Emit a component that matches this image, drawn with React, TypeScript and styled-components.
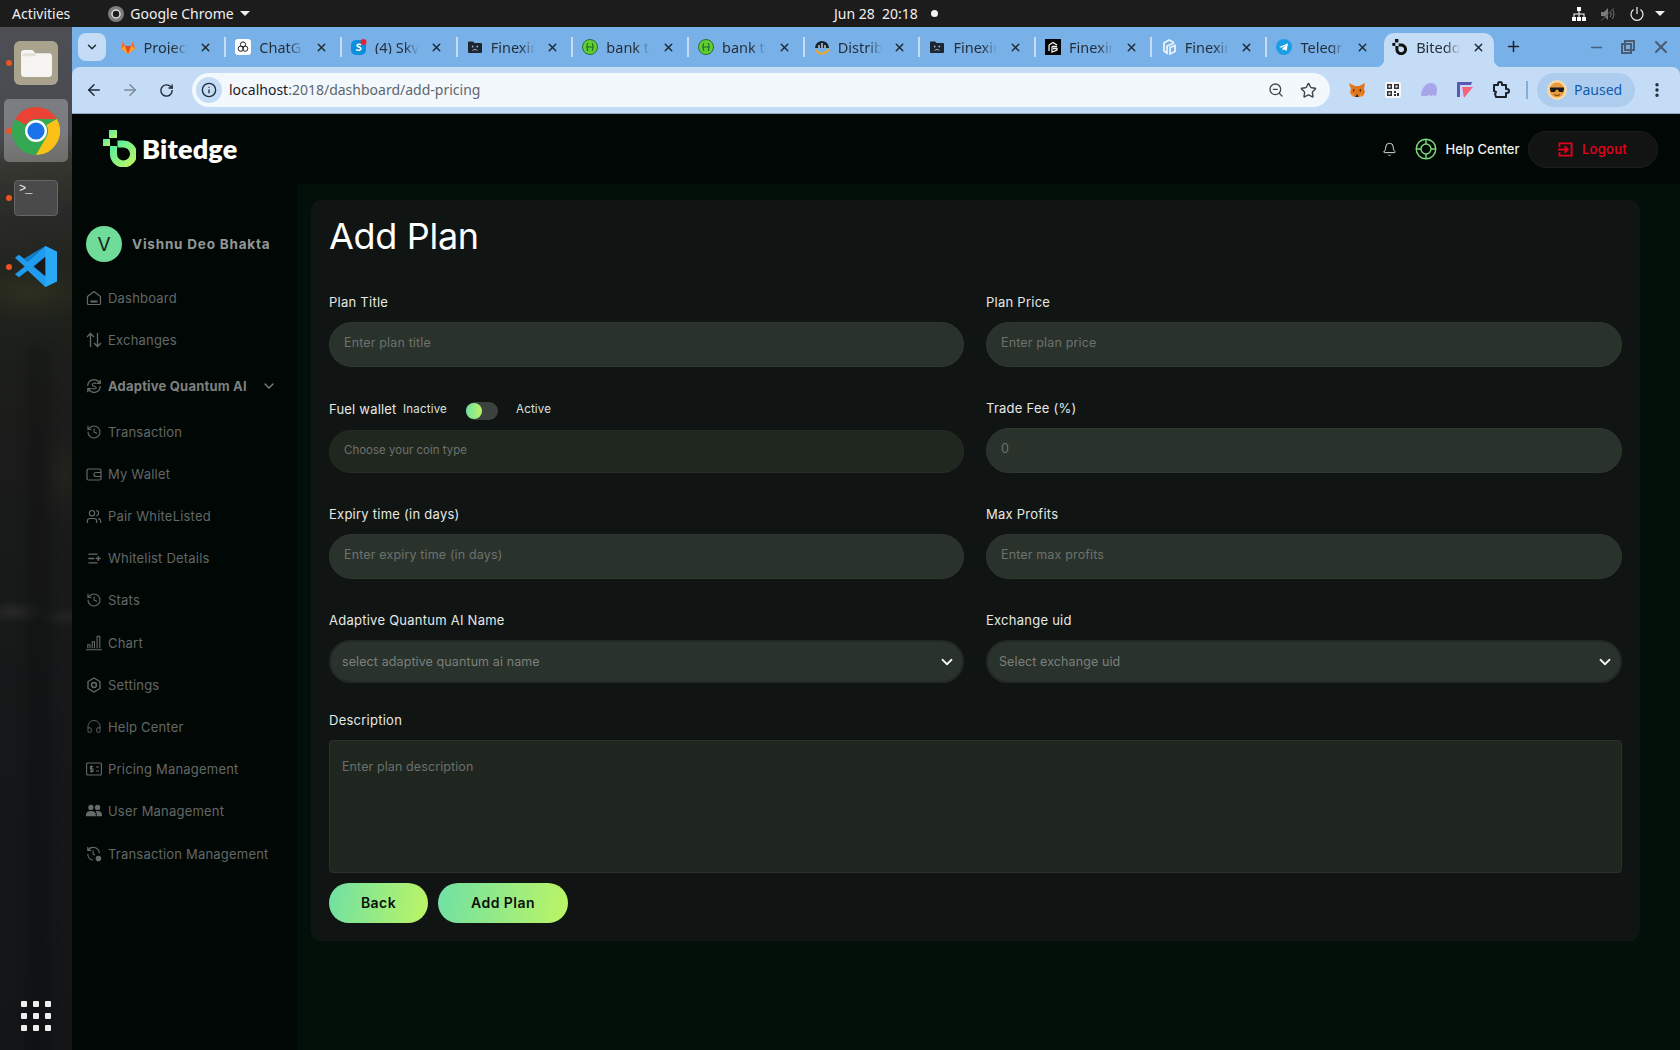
import React from 'react';
import styled, { createGlobalStyle } from 'styled-components';
import {
  ArrowLeft, ArrowRight, RotateCw, Info, ZoomOut, Star, X, Plus, Minus, ChevronDown, Bell,
  History, Headphones, ListPlus, Users, EllipsisVertical,
} from 'lucide-react';

const Global = createGlobalStyle`
  html, body { margin: 0; padding: 0; background: #010705; }
  * { box-sizing: border-box; }
  #root { width: 1680px; height: 1050px; overflow: hidden; }
`;

const AppFont = `"Inter", "Noto Sans", sans-serif`;
const SysFont = `"Noto Sans", "Open Sans", sans-serif`;

const Root = styled.div`
  width: 1680px; height: 1050px; display: flex; flex-direction: column; overflow: hidden;
  font-family: ${AppFont};
`;

/* GNOME bar */
const TopBar = styled.header`
  height: 27px; flex: none; background: #1c1c1c; color: #f0f0f0;
  display: grid; grid-template-columns: 834px auto 1fr; align-items: center;
  font: 14px/27px ${SysFont};
`;
const TopLeft = styled.div`display: flex; align-items: center; padding-left: 12px;`;
const AppMenu = styled.div`display: flex; align-items: center; gap: 6px; margin-left: 38px;`;
const Caret = styled.span<{ $ml: number }>`
  width: 0; height: 0; border-left: 5px solid transparent; border-right: 5px solid transparent;
  border-top: 5px solid #f0f0f0; margin-left: ${p => p.$ml}px;
`;
const Clock = styled.div`display: flex; align-items: center; gap: 13px; font-size: 14px; white-space: pre;`;
const ClockDot = styled.span`width: 7px; height: 7px; border-radius: 50%; background: #f4f4f4;`;
const TopRight = styled.div`display: flex; align-items: center; justify-content: flex-end; gap: 13px; padding-right: 15px;`;

/* Desktop */
const Desktop = styled.div`flex: 1; display: flex; min-height: 0;`;
const Dock = styled.aside`
  width: 72px; flex: none; display: flex; flex-direction: column; align-items: center; position: relative; overflow: hidden;
  background:
    radial-gradient(ellipse 34px 12px at 14px 585px, rgba(120,120,115,.16), transparent),
    radial-gradient(ellipse 26px 10px at 66px 590px, rgba(110,110,105,.13), transparent),
    radial-gradient(ellipse 70px 30px at 30px 265px, rgba(72,76,34,.3), transparent),
    radial-gradient(ellipse 30px 50px at 64px 450px, rgba(50,54,34,.3), transparent),
    linear-gradient(172deg, #4d4f55 0, #484a4f 110px, #35362f 142px, #2a2b28 190px, #22241f 240px, #1d1f1b 320px, #191a1a 480px, #161718 700px, #141517 100%);
  &::before {
    content: ''; position: absolute; left: 26px; width: 24px; top: 320px; bottom: -20px;
    background: rgba(0,0,0,.16); filter: blur(5px);
  }
`;
const DockSlot = styled.div<{ $h: number; $active?: boolean; $mt: number }>`
  width: 64px; height: ${p => p.$h}px; margin-top: ${p => p.$mt}px; flex: none; position: relative;
  display: flex; align-items: center; justify-content: center; border-radius: 5px;
  background: ${p => (p.$active ? 'rgba(255,255,255,.28)' : 'transparent')};
`;
const RunDot = styled.span`
  position: absolute; left: 2px; top: 50%; margin-top: -3px; width: 6px; height: 6px; border-radius: 50%; background: #e95420;
`;
const FilesTile = styled.div`
  width: 44px; height: 44px; border-radius: 6px; background: #a9a28d; display: flex; align-items: center; justify-content: center;
`;
const Term = styled.div`
  width: 44px; height: 36px; border-radius: 4px; background: #4a4a4a; border: 1px solid #666; color: #eee;
  font: 12px/14px "Liberation Mono", monospace; padding: 1px 0 0 4px; letter-spacing: -1px;
`;
const AppGrid = styled.div`
  position: absolute; left: 21px; bottom: 19px; display: grid; grid-template-columns: repeat(3, 6px); gap: 6px;
`;
const AppGridDot = styled.span`width: 6px; height: 6px; background: #eee; border-radius: 1px;`;

/* Browser */
const Browser = styled.main`flex: 1; display: flex; flex-direction: column; min-width: 0;`;
const TabStrip = styled.div`height: 40px; flex: none; background: #78b0e8; display: flex; padding-left: 6px; position: relative;`;
const TabSearch = styled.div`
  width: 28px; height: 28px; margin-top: 6px; margin-right: 3.6px; border-radius: 8px; background: #c5dcf6; color: #1f2a36;
  display: flex; align-items: center; justify-content: center;
`;
const Tab = styled.div<{ $active?: boolean; $last?: boolean }>`
  width: 115.7px; height: 34px; margin-top: 6px; flex: none; display: flex; align-items: center; position: relative;
  padding: 0 0 6px 10px; color: #26303c; font: 14.5px/1 ${SysFont};
  &::before {
    content: ''; position: absolute; inset: 0 4px 0 2px; border-radius: 10px 10px 0 0;
    background: ${p => (p.$active ? '#c5dcf6' : 'transparent')};
  }
  &::after {
    content: ''; position: absolute; right: -1px; top: 4px; height: 20px; width: 2px;
    background: ${p => (p.$active || p.$last ? 'transparent' : '#c5dcf6')};
  }
`;
const Flare = styled.span<{ $side: 'l' | 'r' }>`
  position: absolute; bottom: 0; width: 8px; height: 8px;
  ${p => (p.$side === 'l' ? 'left: -6px;' : 'right: -4px;')}
  background: radial-gradient(circle at ${p => (p.$side === 'l' ? '0 0' : '100% 0')}, transparent 8px, #c5dcf6 8.5px);
`;
const TabIcon = styled.span`width: 16px; height: 16px; flex: none; position: relative; display: flex;`;
const TabTitle = styled.span`
  position: relative; width: 44px; margin-left: 8px; white-space: nowrap; overflow: hidden;
  -webkit-mask-image: linear-gradient(90deg, #000 68%, transparent 100%);
  mask-image: linear-gradient(90deg, #000 68%, transparent 100%);
`;
const TabClose = styled.span`position: relative; margin-left: 11.500px; display: flex; color: #1d2630;`;
const NewTab = styled.div`width: 30px; height: 28px; margin-top: 5px; margin-left: 1px; display: flex; align-items: center; justify-content: center; color: #1d2630;`;
const WindowBtns = styled.div`
  margin-left: auto; display: flex; align-items: center; gap: 16px; padding: 6px 9px 0 0; height: 34px; color: #4a5d74;
`;
const Toolbar = styled.div`
  height: 47px; flex: none; background: #78b0e8;
`;
const ToolbarInner = styled.div`
  height: 47px; background: #c5dcf6; border-radius: 8px 8px 0 0; border-bottom: 1px solid #8ea8c4;
  display: flex; align-items: center; padding-left: 4px;
`;
const NavBtn = styled.div<{ $dim?: boolean }>`
  width: 36px; height: 34px; display: flex; align-items: center; justify-content: center;
  color: ${p => (p.$dim ? '#7d8b9b' : '#1f2a36')};
`;
const UrlBar = styled.div`
  width: 1138px; height: 34px; margin-left: 8px; border-radius: 17px; background: #f3f8fd; flex: none;
  display: flex; align-items: center; padding: 0 13px 0 4px; font: 14px/1 ${SysFont}; color: #5d6670;
`;
const InfoChip = styled.span`
  width: 26px; height: 26px; border-radius: 50%; background: #c5dcf6; color: #1f2a36;
  display: flex; align-items: center; justify-content: center; margin-right: 7px;
`;
const Host = styled.span`color: #1b2128;`;
const UrlTools = styled.div`margin-left: auto; display: flex; align-items: center; gap: 16px; color: #3f4750;`;
const Exts = styled.div`display: flex; align-items: center; gap: 14px; margin-left: 16px; width: 181px; color: #1b2128;`;
const ExtIcon = styled.span`width: 22px; height: 22px; display: flex; align-items: center; justify-content: center; flex: none;`;
const ToolSep = styled.span`width: 2px; height: 18px; background: #7fb0dd; flex: none; margin: 0 9px 0 -1px;`;
const Profile = styled.div`
  width: 98px; height: 34px; border-radius: 17px; background: #aecdee; flex: none;
  display: flex; align-items: center; padding-left: 10px; gap: 7px; color: #0d5cb0; font: 14px/1 ${SysFont};
`;
const Kebab = styled.div`margin-left: 13px; display: flex; color: #1f2a36;`;

/* Page */
const Page = styled.div`flex: 1; min-height: 0; display: flex; flex-direction: column; background: #010705;`;
const AppHeader = styled.div`height: 70px; flex: none; display: flex; align-items: center; padding-left: 31px; padding-right: 22.5px;`;
const Logo = styled.div`display: flex; align-items: center; gap: 6px; height: 40px; margin-top: -2px;`;
const LogoText = styled.span`
  color: #fff; font: 800 27px/1 "Lato", "Inter", sans-serif; letter-spacing: .2px;
`;
const HeadRight = styled.div`margin-left: auto; display: flex; align-items: center; color: #fff;`;
const BellBtn = styled.span`display: flex; color: #d7d9d8; margin-right: 18px;`;
const HelpLink = styled.span`font-size: 13px; font-weight: 500; margin-left: 8px; color: #eef0ef;`;
const LogoutBtn = styled.button`
  width: 130px; height: 37px; margin-left: 8px; border-radius: 19px; background: #111412; border: 1px solid #1b1f1c;
  color: #e6001e; font: 500 13px/1 ${AppFont}; letter-spacing: .3px; display: flex; align-items: center; justify-content: center; gap: 9px;
`;
const Body = styled.div`flex: 1; min-height: 0; display: flex;`;
const Sidebar = styled.nav`width: 225px; flex: none; padding: 42px 0 0 14px;`;
const UserRow = styled.div`display: flex; align-items: center; gap: 10px; margin-bottom: 15px;`;
const Avatar = styled.div`
  width: 36px; height: 36px; border-radius: 50%; background: #6fdc9a; color: #14241b;
  display: flex; align-items: center; justify-content: center; font-size: 19px; font-weight: 400;
`;
const UserName = styled.div`font-size: 13.5px; font-weight: 700; letter-spacing: .8px; color: #929795;`;
const NavList = styled.ul`list-style: none; margin: 0; padding: 0;`;
const NavItem = styled.li<{ $bold?: boolean }>`
  height: 42.2px; display: flex; align-items: center; gap: 6px; font-size: 13px; letter-spacing: .2px;
  color: #636866; font-weight: ${p => (p.$bold ? 700 : 400)};
  ${p => (p.$bold ? 'margin: 3.5px 0; color: #7d817f;' : '')}
`;
const NavIcon = styled.span`width: 16px; height: 16px; flex: none; display: flex; align-items: center; justify-content: center; color: #666b69; position: relative;`;
const NavChevron = styled.span`display: flex; margin-left: 8px; color: #7d817f;`;
const Main = styled.section`flex: 1; min-width: 0; background: #03100a; padding: 16px 40px 0 14px;`;
const Panel = styled.div`background: #101412; border-radius: 10px; padding: 14px 18px 18px;`;
const Title = styled.h1`margin: 0 0 34px; font: 400 36px/44px ${AppFont}; color: #fff; letter-spacing: -.3px;`;
const FormGrid = styled.div`display: grid; grid-template-columns: 635px 636px; column-gap: 22px; row-gap: 31px;`;
const Field = styled.div`display: flex; flex-direction: column; min-width: 0;`;
const Label = styled.label`display: block; height: 20px; margin-bottom: 10px; font: 400 13px/20px ${AppFont}; letter-spacing: .25px; color: #e6e8e6;`;
const FuelLabelRow = styled.div`display: flex; align-items: center; height: 22px; margin-bottom: 10px;`;
const FuelLabel = styled.span`font-size: 13px; letter-spacing: .2px; color: #e6e8e6; width: 74px;`;
const ToggleText = styled.span<{ $w: number }>`font-size: 11.5px; letter-spacing: .2px; color: #dfe2df; width: ${p => p.$w}px;`;
const Toggle = styled.span`
  width: 32px; height: 18px; border-radius: 9px; background: #3c423e; display: flex; align-items: center; margin: 4px 18px 0 0;
`;
const Knob = styled.span`width: 16px; height: 16px; border-radius: 50%; background: linear-gradient(90deg, #6fe0a4, #bdf564);`;
const Input = styled.div<{ $dark?: boolean; $h?: number }>`
  height: ${p => p.$h ?? 45}px; border-radius: 23px; background: ${p => (p.$dark ? '#20271f' : '#2a322c')};
  border: 1px solid ${p => (p.$dark ? '#252c26' : '#2f3731')};
  display: flex; align-items: center; padding: 0 14px 4px; font-size: ${p => (p.$dark ? 11.5 : 12.5)}px;
  letter-spacing: ${p => (p.$dark ? 0 : 0.15)}px; color: #6c726e;
`;
const Select = styled.div`
  height: 43px; border-radius: 22px; background: #2a322c; border: 2px solid #222925;
  display: flex; align-items: center; justify-content: space-between; padding: 0 6px 0 11px;
  font-size: 12.5px; letter-spacing: .1px; color: #7a807c;
`;
const SelectCaret = styled.span`display: flex; color: #f2f2f2;`;
const DescField = styled.div`margin-top: 27px;`;
const TextArea = styled.div`
  height: 133px; border-radius: 4px; background: #1f2620; border: 1px solid #2a312b; padding: 18px 12px;
  font-size: 12.5px; letter-spacing: .1px; color: #6a706c;
`;
const Buttons = styled.div`display: flex; gap: 10px; margin-top: 10px;`;
const GradBtn = styled.button<{ $w: number }>`
  width: ${p => p.$w}px; height: 40px; border: 0; border-radius: 20px; background: linear-gradient(100deg, #6fe0a4, #bdf564);
  color: #0b100d; font: 600 14px/1 ${AppFont}; letter-spacing: .45px;
`;

/* ---- drawings ---- */
const Gitlab = () => (
  <svg viewBox="0 0 16 16" width="16" height="16">
    <path d="M8 15 1 9.700 2.800 2 5 7h6l2.200-5L15 9.700z" fill="#fc6d26" />
    <path d="M8 15 5 7h6z" fill="#e24329" />
    <path d="M8 15 1 9.700 5 7zM8 15l7-5.300L11 7z" fill="#fca326" />
  </svg>
);
const ChatGpt = () => (
  <svg viewBox="0 0 16 16" width="16" height="16">
    <rect width="16" height="16" rx="3" fill="#fff" />
    <g fill="none" stroke="#222" strokeWidth="1">
      <circle cx="8" cy="5.500" r="2.600" /><circle cx="5.800" cy="9.700" r="2.600" /><circle cx="10.200" cy="9.700" r="2.600" />
    </g>
  </svg>
);
const Skype = () => (
  <svg viewBox="0 0 16 16" width="16" height="16">
    <rect y="1" width="15" height="15" rx="5" fill="#0a8fdc" />
    <path d="M10 6c-1-1.200-4-1-4 .5S10 8 10 9.700 6.500 12 5 10.500" stroke="#fff" strokeWidth="1.500" fill="none" />
    <circle cx="12.500" cy="3" r="3" fill="#e8232f" />
  </svg>
);
const SadFolder = () => (
  <svg viewBox="0 0 16 16" width="16" height="16">
    <path d="M1 3.500A1 1 0 0 1 2 2.500h4l1.500 1.500H14a1 1 0 0 1 1 1v8a1 1 0 0 1-1 1H2a1 1 0 0 1-1-1z" fill="#1d2530" />
    <circle cx="5.700" cy="7.500" r=".9" fill="#9fb3c8" /><circle cx="10.300" cy="7.500" r=".9" fill="#9fb3c8" />
    <path d="M5.500 11.500c1-1.300 4-1.300 5 0" stroke="#9fb3c8" strokeWidth="1" fill="none" />
  </svg>
);
const GreenH = () => (
  <svg viewBox="0 0 16 16" width="16" height="16">
    <circle cx="8" cy="8" r="7.500" fill="#5fd030" stroke="#2d6a3a" strokeWidth="1" />
    <path d="M6 4c-1.500 2-1.500 6 0 8M10 4c1.500 2 1.500 6 0 8M5 8h6" stroke="#1d5a2a" strokeWidth="1.100" fill="none" />
  </svg>
);
const Distrib = () => (
  <svg viewBox="0 0 16 16" width="16" height="16">
    <path d="M1 9a7 7 0 1 1 14 0z" fill="#16222e" />
    <path d="M2 11c3 5 9 5 13-1" stroke="#f5a623" strokeWidth="2" fill="none" />
    <path d="M5 9V6M8 9V4M11 9V6" stroke="#d9e5f0" strokeWidth="1.300" />
  </svg>
);
const FinexBlack = () => (
  <svg viewBox="0 0 16 16" width="16" height="16">
    <rect width="16" height="16" fill="#050505" />
    <path d="M4 6l4-2.500L12 6M4 6v6M7 7.500h5M7 7.500V13l5-2V9.500H8" stroke="#eee" strokeWidth="1.300" fill="none" />
  </svg>
);
const FinexLight = () => (
  <svg viewBox="0 0 16 16" width="16" height="16" fill="none" stroke="#eaf3fb" strokeWidth="1.800">
    <path d="M13 3.500 8 1 3 4v8l3 2V7l7-3M9 8.500l5-2v6L9 15z" />
  </svg>
);
const Telegram = () => (
  <svg viewBox="0 0 16 16" width="16" height="16">
    <circle cx="8" cy="8" r="8" fill="#1c9ce5" />
    <path d="M3.200 8 12 4.300 10.600 12 8 10.200 6.700 11.500 6.500 9.300 10.400 6 5.500 8.800z" fill="#fff" />
  </svg>
);
const BLogo = ({ width, height, gradient = false }: { width: number; height: number; gradient?: boolean }) => (
  <svg viewBox="0 0 33 37" width={width} height={height}>
    <defs>
      <linearGradient id="blogo" x1="0" y1="0" x2="1" y2="1">
        <stop offset="0" stopColor="#55ee9e" /><stop offset="1" stopColor="#bdf564" />
      </linearGradient>
    </defs>
    <g fill={gradient ? 'url(#blogo)' : '#111'}>
      <rect x="6" y="0" width="8" height="8" />
      <rect x="0" y="9" width="7" height="7" />
    </g>
    <path d="M10.500 16v8a10 10 0 1 0 9-10h-5" fill="none" stroke={gradient ? 'url(#blogo)' : '#111'} strokeWidth="7" />
  </svg>
);
const NodeIcon = () => (
  <svg viewBox="0 0 16 16" width="16" height="16" fill="#fff">
    <rect x="6" y="1" width="4" height="4" /><rect x="1" y="11" width="4" height="4" /><rect x="6" y="11" width="4" height="4" /><rect x="11" y="11" width="4" height="4" />
    <path d="M7.500 5h1v2.500H13.500V11h-1V8.500h-4V11h-1V8.500h-4V11h-1V7.500H7.500z" />
  </svg>
);
const Muted = () => (
  <svg viewBox="0 0 16 16" width="16" height="16">
    <path d="M1 6h3l4-4v12l-4-4H1z" fill="#7a7a7a" />
    <path d="M10 5c1.500 1.500 1.500 4.500 0 6M12 3c2.500 2.500 2.500 7.500 0 10" stroke="#7a7a7a" fill="none" />
    <path d="M1 15 14 2" stroke="#555" />
  </svg>
);
const Power = () => (
  <svg viewBox="0 0 16 16" width="16" height="16" fill="none" stroke="#f0f0f0" strokeWidth="1.200">
    <path d="M8 1v7M4.500 3.500a6 6 0 1 0 7 0" />
  </svg>
);
const ChromeMini = ({ size }: { size: number }) => (
  <svg viewBox="0 0 48 48" width={size} height={size}>
    <circle cx="24" cy="24" r="24" fill="#34a853" />
    <path d="M24 0a24 24 0 0 1 20.800 12H24a12 12 0 0 0-10.400 6L3.200 12A24 24 0 0 1 24 0z" fill="#ea4335" />
    <path d="M44.800 12A24 24 0 0 1 24 48l10.400-18A12 12 0 0 0 34.400 18z" fill="#fbc116" />
    <circle cx="24" cy="24" r="11" fill="#fff" />
    <circle cx="24" cy="24" r="8.600" fill="#1a73e8" />
  </svg>
);
const ChromeGray = () => (
  <svg viewBox="0 0 16 16" width="16" height="16">
    <circle cx="8" cy="8" r="8" fill="#7c7c7c" /><circle cx="8" cy="8" r="4" fill="#1c1c1c" stroke="#ddd" strokeWidth="1.500" />
  </svg>
);
const VsCode = () => (
  <svg viewBox="0 0 44 44" width="43" height="43">
    <path d="M31 1 43 7v30l-12 6L13 26 4 33 0 30l10-8L0 13l4-3 9 7z" fill="#1f9cf0" />
    <path d="M31 1 43 7v30l-12 6z" fill="#2aa8f5" />
    <path d="M31 12 19 22l12 10z" fill="#17191a" />
    <path d="M31 1 13 17l-4-3z" fill="#0d7fcf" />
  </svg>
);
const Folder = () => (
  <svg viewBox="0 0 32 28" width="33" height="29">
    <path d="M1 4a3 3 0 0 1 3-3h8l3 3h13a3 3 0 0 1 3 3v17a3 3 0 0 1-3 3H4a3 3 0 0 1-3-3z" fill="#f6f5f1" />
    <path d="M1 7h13l3-3H4z" fill="#e3e0d8" />
  </svg>
);
const Fox = () => (
  <svg viewBox="0 0 18 18" width="18" height="18">
    <path d="M1 2l6 3h4l6-3-1 6 1 3-2 4-3 1H7l-3-1-2-4 1-3z" fill="#e2761b" />
    <path d="M7 16l2-3 2 3zM5 8l2 1-2 2zM13 8l-2 1 2 2z" fill="#3c2a1a" />
    <path d="M4 12l3 4H5zM14 12l-3 4h2z" fill="#f6a25a" />
  </svg>
);
const Qr = () => (
  <svg viewBox="0 0 16 16" width="16" height="16">
    <rect width="16" height="16" rx="2" fill="#f4f6f8" />
    <path d="M2 2h5v5H2zM9 2h5v5H9zM2 9h5v5H2zM9 9h2v2H9zM12 11h2v3h-2zM9 12h2v2H9z" fill="#333" />
    <path d="M3.500 3.500h2v2h-2zM10.500 3.500h2v2h-2zM3.500 10.500h2v2h-2z" fill="#f4f6f8" />
  </svg>
);
const Ghost = () => (
  <svg viewBox="0 0 18 14" width="18" height="14">
    <path d="M1 14C1 6 5 0 11 0c4 0 6 3 6 7s-1 6-2 6-1-1-2-1-1 1-2 1-1-1-2-1-1 1-2 1H1z" fill="#a7a6ea" />
  </svg>
);
const FlagExt = () => (
  <svg viewBox="0 0 16 18" width="16" height="18">
    <path d="M0 1h15l-1 3H3v12H0z" fill="#5b57b5" />
    <path d="M5 6h11l-9 11z" fill="#f5637e" />
  </svg>
);
const PuzzleExt = () => (
  <svg viewBox="0 0 18 18" width="18" height="18" fill="none" stroke="#1b2128" strokeWidth="2" strokeLinejoin="round">
    <path d="M2 4h4V3a2 2 0 0 1 4 0v1h4v4h1a2 2 0 0 1 0 4h-1v4H4l-1-3 1-2-2-1z" />
  </svg>
);
const SunAvatar = () => (
  <svg viewBox="0 0 20 20" width="20" height="20">
    <circle cx="10" cy="10" r="9.500" fill="#f7d9a0" stroke="#fbe9c8" strokeDasharray="1.500 1.500" />
    <circle cx="10" cy="10" r="7.500" fill="#e99a3a" />
    <path d="M3 7.500h14v1.500l-1 3h-3.500L10.500 9.500h-1L7.500 12H4L3 9z" fill="#1a1a1a" />
    <path d="M7 14.500c2 1.300 4 1.300 6 0" stroke="#6b3a12" fill="none" />
  </svg>
);
const DashIcon = () => (
  <svg viewBox="0 0 16 16" width="16" height="16" fill="none" stroke="currentColor" strokeWidth="1.200">
    <path d="M1.500 6.500 8 1.500l6.500 5v7a1 1 0 0 1-1 1h-11a1 1 0 0 1-1-1z" />
    <path d="M4.500 11.500h7" strokeWidth="2" />
  </svg>
);
const ArrowsIcon = () => (
  <svg viewBox="0 0 16 16" width="16" height="16" fill="none" stroke="currentColor" strokeWidth="1.300">
    <path d="M4.500 15V1.500M1 5l3.500-3.500L8 5M11.500 1v13.500M8 11l3.500 3.500L15 11" />
  </svg>
);
const QuantIcon = () => (
  <svg viewBox="0 0 18 18" width="18" height="18" fill="none" stroke="currentColor" strokeWidth="1.400">
    <path d="M2 9a7 7 0 0 1 12-5l2 2M16 9a7 7 0 0 1-12 5l-2-2M16 2v4h-4M2 16v-4h4" />
    <path d="M11.500 6.500C11 5.500 7 5.500 7 7.500S11.500 9 11.500 11 7 12.500 6.500 11.500" strokeWidth="1.300" />
  </svg>
);
const WalletIcon = () => (
  <svg viewBox="0 0 16 16" width="16" height="16" fill="none" stroke="currentColor" strokeWidth="1.200">
    <rect x="1" y="3" width="14" height="11" rx="1.500" /><path d="M15 6.500H10a2 2 0 0 0 0 4h5" />
  </svg>
);
const ChartIcon = () => (
  <svg viewBox="0 0 18 16" width="18" height="16" fill="none" stroke="currentColor" strokeWidth="1.200">
    <path d="M0 15.500h18M2 14V10h2.500v4M7 14V6.500h2.500V14M12.500 14V.500H15.500V14" />
  </svg>
);
const HexIcon = () => (
  <svg viewBox="0 0 16 16" width="16" height="16" fill="none" stroke="currentColor" strokeWidth="1.300">
    <path d="M8 1l6 3.500v7L8 15l-6-3.500v-7z" /><circle cx="8" cy="8" r="2.400" strokeWidth="1.500" />
  </svg>
);
const PriceIcon = () => (
  <svg viewBox="0 0 16 14" width="16" height="14" fill="none" stroke="currentColor" strokeWidth="1.100">
    <rect x=".6" y="1" width="14.800" height="12" rx="1" />
    <path d="M7 4.500H4.500v2.500h2.500V9.500H4M5.500 3.500v7M10 5h3M10 9h3" />
  </svg>
);
const TeamIcon = () => (
  <svg viewBox="0 0 18 16" width="18" height="16" fill="currentColor">
    <circle cx="5.500" cy="4" r="3" /><circle cx="13" cy="4" r="3" />
    <path d="M0 14v-2c0-2.500 2-4 5.500-4S11 9.500 11 12v2zM12 14v-2c0-1.500-.5-2.800-1.500-3.600.8-.3 1.600-.4 2.500-.4 3 0 5 1.500 5 4v2z" />
  </svg>
);
const TxGear = () => (
  <svg viewBox="0 0 18 18" width="18" height="18" fill="none" stroke="currentColor" strokeWidth="1.300">
    <path d="M2 5a7 7 0 0 1 13 3M2 1v4h4M2 9a7 7 0 0 0 6 7M8 5v4l2 1" />
    <circle cx="14" cy="14" r="2.500" fill="currentColor" />
  </svg>
);
const Lifebuoy = () => (
  <svg viewBox="0 0 22 22" width="22" height="22" fill="none" stroke="#7fdc7a" strokeWidth="1.400">
    <circle cx="11" cy="11" r="9.800" /><circle cx="11" cy="11" r="5" />
    <path d="M11 1v5M11 16v5M1 11h5M16 11h5" />
  </svg>
);
const LogoutIcon = () => (
  <svg viewBox="0 0 16 16" width="15" height="15" fill="none" stroke="currentColor" strokeWidth="2">
    <path d="M1.500 5V1.500h13v13h-13V11M0 8h10M7 4.500 10.500 8 7 11.500" />
  </svg>
);

const tabs: { icon: React.ReactNode; title: string }[] = [
  { icon: <Gitlab />, title: 'Project' },
  { icon: <ChatGpt />, title: 'ChatGPT' },
  { icon: <Skype />, title: '(4) Skype' },
  { icon: <SadFolder />, title: 'Finexin' },
  { icon: <GreenH />, title: 'bank to' },
  { icon: <GreenH />, title: 'bank to' },
  { icon: <Distrib />, title: 'Distribut' },
  { icon: <SadFolder />, title: 'Finexin' },
  { icon: <FinexBlack />, title: 'Finexin' },
  { icon: <FinexLight />, title: 'Finexin' },
  { icon: <Telegram />, title: 'Telegram' },
];

const nav: { icon: React.ReactNode; label: string; bold?: boolean }[] = [
  { icon: <DashIcon />, label: 'Dashboard' },
  { icon: <ArrowsIcon />, label: 'Exchanges' },
  { icon: <QuantIcon />, label: 'Adaptive Quantum AI', bold: true },
  { icon: <History size={16} strokeWidth={1.6} />, label: 'Transaction' },
  { icon: <WalletIcon />, label: 'My Wallet' },
  { icon: <Users size={17} strokeWidth={1.7} />, label: 'Pair WhiteListed' },
  { icon: <ListPlus size={15} strokeWidth={2.2} />, label: 'Whitelist Details' },
  { icon: <History size={16} strokeWidth={1.6} />, label: 'Stats' },
  { icon: <ChartIcon />, label: 'Chart' },
  { icon: <HexIcon />, label: 'Settings' },
  { icon: <Headphones size={19} strokeWidth={1.3} />, label: 'Help Center' },
  { icon: <PriceIcon />, label: 'Pricing Management' },
  { icon: <TeamIcon />, label: 'User Management' },
  { icon: <TxGear />, label: 'Transaction Management' },
];

export default function App() {
  return (
    <Root>
      <Global />
      <TopBar>
        <TopLeft>
          Activities
          <AppMenu><ChromeGray />Google Chrome<Caret $ml={0} /></AppMenu>
        </TopLeft>
        <Clock>{'Jun 28  20:18'}<ClockDot /></Clock>
        <TopRight>
          <NodeIcon /><Muted /><Power /><Caret $ml={-2.5} />
        </TopRight>
      </TopBar>
      <Desktop>
        <Dock>
          <DockSlot $h={44} $mt={14}><RunDot /><FilesTile><Folder /></FilesTile></DockSlot>
          <DockSlot $h={63} $mt={14} $active><RunDot /><ChromeMini size={48} /></DockSlot>
          <DockSlot $h={36} $mt={18}><RunDot /><Term>&gt;_</Term></DockSlot>
          <DockSlot $h={43} $mt={29}><RunDot /><VsCode /></DockSlot>
          <AppGrid>{Array.from({ length: 9 }).map((_, i) => <AppGridDot key={i} />)}</AppGrid>
        </Dock>
        <Browser>
          <TabStrip>
            <TabSearch><ChevronDown size={14} strokeWidth={2.5} /></TabSearch>
            {tabs.map((t, i) => (
              <Tab key={i} $last={i === tabs.length - 1}>
                <TabIcon>{t.icon}</TabIcon>
                <TabTitle>{t.title}</TabTitle>
                <TabClose><X size={13} strokeWidth={2.5} /></TabClose>
              </Tab>
            ))}
            <Tab $active>
              <Flare $side="l" /><Flare $side="r" />
              <TabIcon><BLogo width={15} height={16} /></TabIcon>
              <TabTitle>Bitedge</TabTitle>
              <TabClose><X size={13} strokeWidth={2.5} /></TabClose>
            </Tab>
            <NewTab><Plus size={17} strokeWidth={2.2} /></NewTab>
            <WindowBtns>
              <Minus size={17} strokeWidth={2} />
              <svg viewBox="0 0 14 14" width="14" height="14" fill="none" stroke="currentColor" strokeWidth="2"><rect x="4" y="1" width="9" height="9" /><rect x="1" y="4" width="9" height="9" /></svg>
              <X size={20} strokeWidth={2.5} />
            </WindowBtns>
          </TabStrip>
          <Toolbar>
            <ToolbarInner>
              <NavBtn><ArrowLeft size={18} strokeWidth={2} /></NavBtn>
              <NavBtn $dim><ArrowRight size={18} strokeWidth={2} /></NavBtn>
              <NavBtn><RotateCw size={15} strokeWidth={2.2} /></NavBtn>
              <UrlBar>
                <InfoChip><Info size={16} strokeWidth={2} /></InfoChip>
                <Host>localhost</Host>:2018/dashboard/add-pricing
                <UrlTools>
                  <ZoomOut size={16} strokeWidth={2} />
                  <Star size={17} strokeWidth={2} />
                </UrlTools>
              </UrlBar>
              <Exts>
                <ExtIcon><Fox /></ExtIcon>
                <ExtIcon><Qr /></ExtIcon>
                <ExtIcon><Ghost /></ExtIcon>
                <ExtIcon><FlagExt /></ExtIcon>
                <ExtIcon><PuzzleExt /></ExtIcon>
              </Exts>
              <ToolSep />
              <Profile><SunAvatar />Paused</Profile>
              <Kebab><EllipsisVertical size={18} strokeWidth={2.5} /></Kebab>
            </ToolbarInner>
          </Toolbar>
          <Page>
            <AppHeader>
              <Logo>
                <BLogo width={33} height={37} gradient />
                <LogoText>Bitedge</LogoText>
              </Logo>
              <HeadRight>
                <BellBtn><Bell size={15} strokeWidth={1.6} /></BellBtn>
                <Lifebuoy />
                <HelpLink>Help Center</HelpLink>
                <LogoutBtn><LogoutIcon />Logout</LogoutBtn>
              </HeadRight>
            </AppHeader>
            <Body>
              <Sidebar>
                <UserRow>
                  <Avatar>V</Avatar>
                  <UserName>Vishnu Deo Bhakta</UserName>
                </UserRow>
                <NavList>
                  {nav.map(n => (
                    <NavItem key={n.label} $bold={n.bold}>
                      <NavIcon>{n.icon}</NavIcon>
                      {n.label}
                      {n.bold && <NavChevron><ChevronDown size={16} strokeWidth={2} /></NavChevron>}
                    </NavItem>
                  ))}
                </NavList>
              </Sidebar>
              <Main>
                <Panel>
                  <Title>Add Plan</Title>
                  <FormGrid>
                    <Field><Label>Plan Title</Label><Input>Enter plan title</Input></Field>
                    <Field><Label>Plan Price</Label><Input>Enter plan price</Input></Field>
                    <Field>
                      <FuelLabelRow>
                        <FuelLabel>Fuel wallet</FuelLabel>
                        <ToggleText $w={63}>Inactive</ToggleText>
                        <Toggle><Knob /></Toggle>
                        <ToggleText $w={40}>Active</ToggleText>
                      </FuelLabelRow>
                      <Input $dark $h={43}>Choose your coin type</Input>
                    </Field>
                    <Field><Label>Trade Fee (%)</Label><Input>0</Input></Field>
                    <Field><Label>Expiry time (in days)</Label><Input>Enter expiry time (in days)</Input></Field>
                    <Field><Label>Max Profits</Label><Input>Enter max profits</Input></Field>
                    <Field>
                      <Label>Adaptive Quantum AI Name</Label>
                      <Select>select adaptive quantum ai name<SelectCaret><ChevronDown size={18} strokeWidth={2.4} /></SelectCaret></Select>
                    </Field>
                    <Field>
                      <Label>Exchange uid</Label>
                      <Select>Select exchange uid<SelectCaret><ChevronDown size={18} strokeWidth={2.4} /></SelectCaret></Select>
                    </Field>
                  </FormGrid>
                  <DescField>
                    <Label>Description</Label>
                    <TextArea>Enter plan description</TextArea>
                  </DescField>
                  <Buttons>
                    <GradBtn $w={99}>Back</GradBtn>
                    <GradBtn $w={130}>Add Plan</GradBtn>
                  </Buttons>
                </Panel>
              </Main>
            </Body>
          </Page>
        </Browser>
      </Desktop>
    </Root>
  );
}
